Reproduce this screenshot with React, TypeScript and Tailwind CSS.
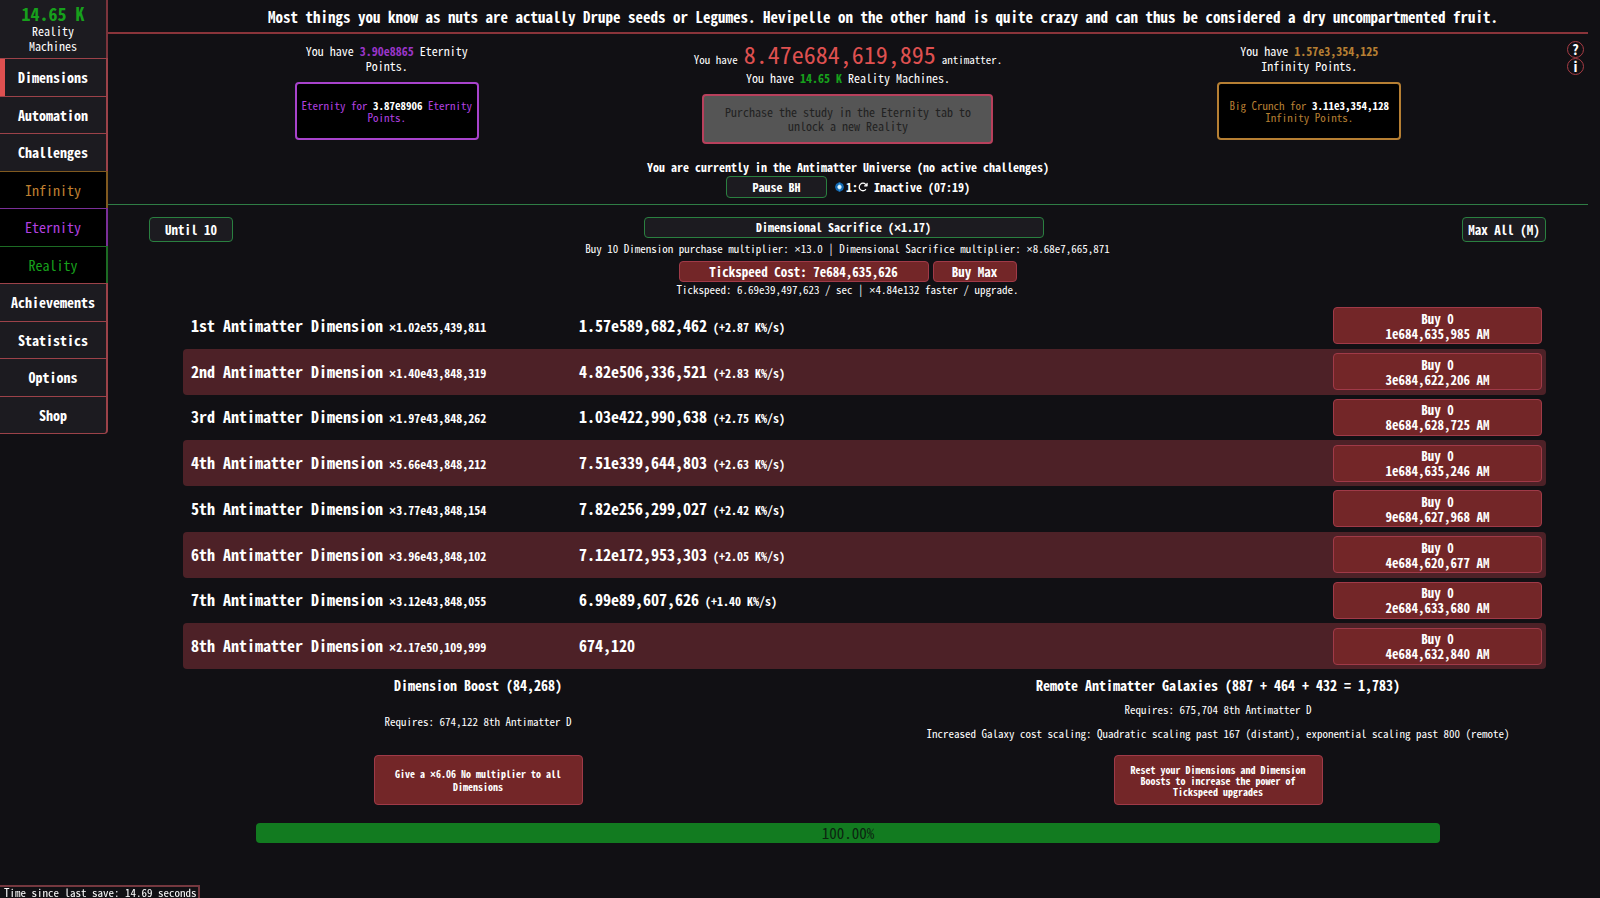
import React from 'react';
import { cva, type VariantProps } from 'class-variance-authority';
import { clsx } from 'clsx';
import { FaArrowRotateRight } from 'react-icons/fa6';

const gameButton = cva('rounded-[4px] text-center', {
  variants: {
    variant: {
      plain: 'border bg-[#1c1b20] border-[#2a8040] text-white font-bold',
      buy: 'border bg-[#732628] border-[#a03a48] text-white font-bold',
      locked: 'border-2 bg-[#555555] border-[#b8405c] text-[#222222]',
      eternity: 'border-2 bg-black border-[#a843cc] text-[#b341e0]',
      infinity: 'border-2 bg-black border-[#b67f33] text-[#b67f33]',
    },
    size: {
      xs: 'text-[10px] leading-[11px]',
      sm: 'text-[11px] leading-[12px]',
      md: 'text-[12px] leading-[14px]',
      lg: 'text-[13px] leading-[15px]',
    },
  },
  defaultVariants: {
    variant: 'plain',
    size: 'md',
  },
});

interface GameButtonProps
  extends React.ButtonHTMLAttributes<HTMLButtonElement>,
    VariantProps<typeof gameButton> {}

const GameButton = ({ variant, size, className, ...props }: GameButtonProps) => (
  <button type="button" className={clsx(gameButton({ variant, size }), className)} {...props} />
);

// CJK fonts draw the multiplication sign full width, so it gets its own family
const Mult = ({ value }: { value: string }) => (
  <>
    <span className="font-['Liberation_Mono',monospace] leading-none">×</span>
    {value}
  </>
);

const defaultTab = 'bg-[#1c1b20] border-[#9c4249] text-white font-bold';

const tabs = [
  { name: 'Dimensions', style: defaultTab, active: true },
  { name: 'Automation', style: defaultTab },
  { name: 'Challenges', style: defaultTab },
  { name: 'Infinity', style: 'bg-black border-[#80591f] text-[#c08030]' },
  { name: 'Eternity', style: 'bg-black border-[#7a2f98] text-[#b341e0]' },
  { name: 'Reality', style: 'bg-black border-[#1d6b24] text-[#17a01c]' },
  { name: 'Achievements', style: defaultTab },
  { name: 'Statistics', style: defaultTab },
  { name: 'Options', style: defaultTab },
  { name: 'Shop', style: clsx(defaultTab, 'border-b rounded-br-[4px]') },
];

const dimensions = [
  { name: '1st', mult: '1.02e55,439,811', amount: '1.57e589,682,462', rate: '(+2.87 K%/s)', cost: '1e684,635,985 AM' },
  { name: '2nd', mult: '1.40e43,848,319', amount: '4.82e506,336,521', rate: '(+2.83 K%/s)', cost: '3e684,622,206 AM' },
  { name: '3rd', mult: '1.97e43,848,262', amount: '1.03e422,990,638', rate: '(+2.75 K%/s)', cost: '8e684,628,725 AM' },
  { name: '4th', mult: '5.66e43,848,212', amount: '7.51e339,644,803', rate: '(+2.63 K%/s)', cost: '1e684,635,246 AM' },
  { name: '5th', mult: '3.77e43,848,154', amount: '7.82e256,299,027', rate: '(+2.42 K%/s)', cost: '9e684,627,968 AM' },
  { name: '6th', mult: '3.96e43,848,102', amount: '7.12e172,953,303', rate: '(+2.05 K%/s)', cost: '4e684,620,677 AM' },
  { name: '7th', mult: '3.12e43,848,055', amount: '6.99e89,607,626', rate: '(+1.40 K%/s)', cost: '2e684,633,680 AM' },
  { name: '8th', mult: '2.17e50,109,999', amount: '674,120', rate: '', cost: '4e684,632,840 AM' },
];

const Sidebar = () => (
  <aside className="w-[108px] shrink-0 text-center">
    <div className="h-[58px] pt-1 bg-[#1c1b20] border-r-2 border-[#7c343c] text-[12px] leading-[15px]">
      <div className="text-[18px] leading-[19px] font-bold text-[#17a01c]">14.65 K</div>
      <div>
        Reality
        <br />
        Machines
      </div>
    </div>
    <nav className="flex flex-col h-[376px]">
      {tabs.map(tab => (
        <button
          key={tab.name}
          type="button"
          className={clsx('relative flex-1 border-t border-r-2 text-[14px] leading-[18px]', tab.style)}
        >
          {tab.active && <span className="absolute left-0 inset-y-0 w-[5px] bg-[#df5050]" />}
          {tab.name}
        </button>
      ))}
    </nav>
  </aside>
);

const Resources = () => (
  <div className="grid grid-cols-3 px-12">
    <div className="flex flex-col items-center pt-[9px] text-center">
      <p className="w-[184px] text-[12px] leading-[15px]">
        You have <span className="font-bold text-[#9a35c8]">3.90e8865</span> Eternity Points.
      </p>
      <GameButton variant="eternity" size="sm" className="w-[184px] h-[58px] mt-[9px]">
        Eternity for <span className="font-bold text-white">3.87e8906</span> Eternity Points.
      </GameButton>
    </div>
    <div className="flex flex-col items-center pt-[6px] text-center">
      <p className="flex items-baseline gap-[6px] h-7 text-[11px] leading-[14px] whitespace-nowrap">
        <span>You have</span>
        <span className="text-[24px] leading-[28px] text-[#df5050]">8.47e684,619,895</span>
        <span>antimatter.</span>
      </p>
      <p className="text-[12px] leading-[20px] whitespace-nowrap">
        You have <span className="font-bold text-[#17a01c]">14.65 K</span> Reality Machines.
      </p>
      <GameButton variant="locked" className="w-[291px] h-[50px] mt-[6px] px-5">
        Purchase the study in the Eternity tab to unlock a new Reality
      </GameButton>
    </div>
    <div className="flex flex-col items-center pt-[9px] text-center">
      <p className="w-[184px] text-[12px] leading-[15px]">
        You have <span className="font-bold text-[#b67f33]">1.57e3,354,125</span> Infinity Points.
      </p>
      <GameButton variant="infinity" size="sm" className="w-[184px] h-[58px] mt-[9px]">
        Big Crunch for <span className="font-bold text-white">3.11e3,354,128</span> Infinity Points.
      </GameButton>
    </div>
  </div>
);

const BlackHoleStatus = () => (
  <div className="flex justify-center items-center gap-2 pb-[6px] text-[12px] leading-[14px] font-bold">
    <GameButton className="w-[101px] h-[22px]">Pause BH</GameButton>
    <span className="flex items-center">
      <svg viewBox="0 0 18 20" className="w-[9px] h-[10px] mr-[2px]">
        <path d="M9 0l7 4 2 6-2 6-7 4-7-4-2-6 2-6z" fill="#1568b0" />
        <path d="M9 2l5 8-5 8-5-8z" fill="#3f9fe0" />
        <circle cx="9" cy="10" r="4" fill="#dff4ff" />
      </svg>
      1:
      <FaArrowRotateRight className="w-[10px] h-[10px] mr-[6px]" />
      Inactive (07:19)
    </span>
  </div>
);

const DimensionHeader = () => (
  <div className="flex justify-between items-start pt-3 pl-[41px] pr-[42px]">
    <GameButton size="lg" className="w-[84px] h-[25px]">Until 10</GameButton>
    <div className="flex flex-col items-center text-[11px] leading-[14px] whitespace-nowrap">
      <GameButton className="w-[400px] h-[21px] mr-2">
        Dimensional Sacrifice (<Mult value="1.17" />)
      </GameButton>
      <p className="h-[23px] pt-[3px]">
        Buy 10 Dimension purchase multiplier: <Mult value="13.0" /> | Dimensional Sacrifice multiplier:{' '}
        <Mult value="8.68e7,665,871" />
      </p>
      <div className="flex gap-1">
        <GameButton variant="buy" size="lg" className="w-[250px] h-[21px]">
          Tickspeed Cost: 7e684,635,626
        </GameButton>
        <GameButton variant="buy" size="lg" className="w-[84px] h-[21px]">Buy Max</GameButton>
      </div>
      <p className="h-[15px]">
        Tickspeed: 6.69e39,497,623 / sec | <Mult value="4.84e132" /> faster / upgrade.
      </p>
    </div>
    <GameButton size="lg" className="w-[84px] h-[25px]">Max All (M)</GameButton>
  </div>
);

const DimensionRows = () => (
  <div className="grid grid-rows-8 h-[366px] mt-[6px] ml-[75px] mr-[42px] font-bold">
    {dimensions.map(dim => (
      <div
        key={dim.name}
        className="grid grid-cols-[388px_1fr_209px] items-center pl-2 pr-1 rounded-[4px] text-[16px] leading-[20px] even:bg-[#4d2127]"
      >
        <div>
          {dim.name} Antimatter Dimension
          <span className="text-[12px]">
            {' '}
            <Mult value={dim.mult} />
          </span>
        </div>
        <div>
          {dim.amount}
          <span className="text-[12px]"> {dim.rate}</span>
        </div>
        <GameButton variant="buy" size="lg" className="h-[37px]">
          Buy 0
          <br />
          {dim.cost}
        </GameButton>
      </div>
    ))}
  </div>
);

interface ResetPanelProps {
  title: string;
  lines: string[];
  action: React.ReactNode;
}

const ResetPanel = ({ title, lines, action }: ResetPanelProps) => (
  <div className="flex flex-col items-center text-center">
    <h3 className="pt-2 text-[14px] leading-[16px] font-bold">{title}</h3>
    <div className="flex-1 flex flex-col justify-center gap-[10px] pb-[6px] text-[11px] leading-[14px]">
      {lines.map(line => (
        <p key={line}>{line}</p>
      ))}
    </div>
    <GameButton variant="buy" size="xs" className="w-[209px] h-[50px] px-4">
      {action}
    </GameButton>
  </div>
);

export default function App() {
  return (
    <div className="flex min-h-screen bg-[#111014] text-white font-['Noto_Sans_Mono_CJK_SC','Liberation_Mono',monospace]">
      <Sidebar />
      <main className="relative flex-1 min-w-0 pr-3">
        <header className="h-[34px] pl-[70px] border-b-2 border-[#8a343a] text-center text-[15px] leading-[34px] font-bold whitespace-nowrap">
          Most things you know as nuts are actually Drupe seeds or Legumes. Hevipelle on the other hand is quite
          crazy and can thus be considered a dry uncompartmented fruit.
        </header>
        <div className="absolute top-[41px] right-4 flex flex-col">
          {['?', 'i'].map(label => (
            <button
              key={label}
              type="button"
              className="w-[17px] h-[17px] border border-[#a83c44] rounded-full text-[14px] leading-[15px] font-bold"
            >
              {label}
            </button>
          ))}
        </div>
        <Resources />
        <p className="pt-[15px] pb-[2px] text-center text-[12px] leading-[15px] font-bold">
          You are currently in the Antimatter Universe (no active challenges)
        </p>
        <BlackHoleStatus />
        <div className="border-t border-[#2f7d45]" />
        <DimensionHeader />
        <DimensionRows />
        <div className="grid grid-cols-2 h-[136px]">
          <ResetPanel
            title="Dimension Boost (84,268)"
            lines={['Requires: 674,122 8th Antimatter D']}
            action={
              <>
                Give a <Mult value="6.06" /> No multiplier to all Dimensions
              </>
            }
          />
          <ResetPanel
            title="Remote Antimatter Galaxies (887 + 464 + 432 = 1,783)"
            lines={[
              'Requires: 675,704 8th Antimatter D',
              'Increased Galaxy cost scaling: Quadratic scaling past 167 (distant), exponential scaling past 800 (remote)',
            ]}
            action="Reset your Dimensions and Dimension Boosts to increase the power of Tickspeed upgrades"
          />
        </div>
        <div className="w-4/5 h-5 mt-[18px] mx-auto rounded-[4px] bg-[#127b20] text-center text-[15px] leading-[20px] text-[#0c2410]">
          100.00%
        </div>
      </main>
      <footer className="fixed left-0 bottom-0 h-[13px] pl-1 pr-px border-t-2 border-r-2 border-[#75383f] bg-[#111014] text-[11px] leading-[11px]">
        Time since last save: 14.69 seconds
      </footer>
    </div>
  );
}
